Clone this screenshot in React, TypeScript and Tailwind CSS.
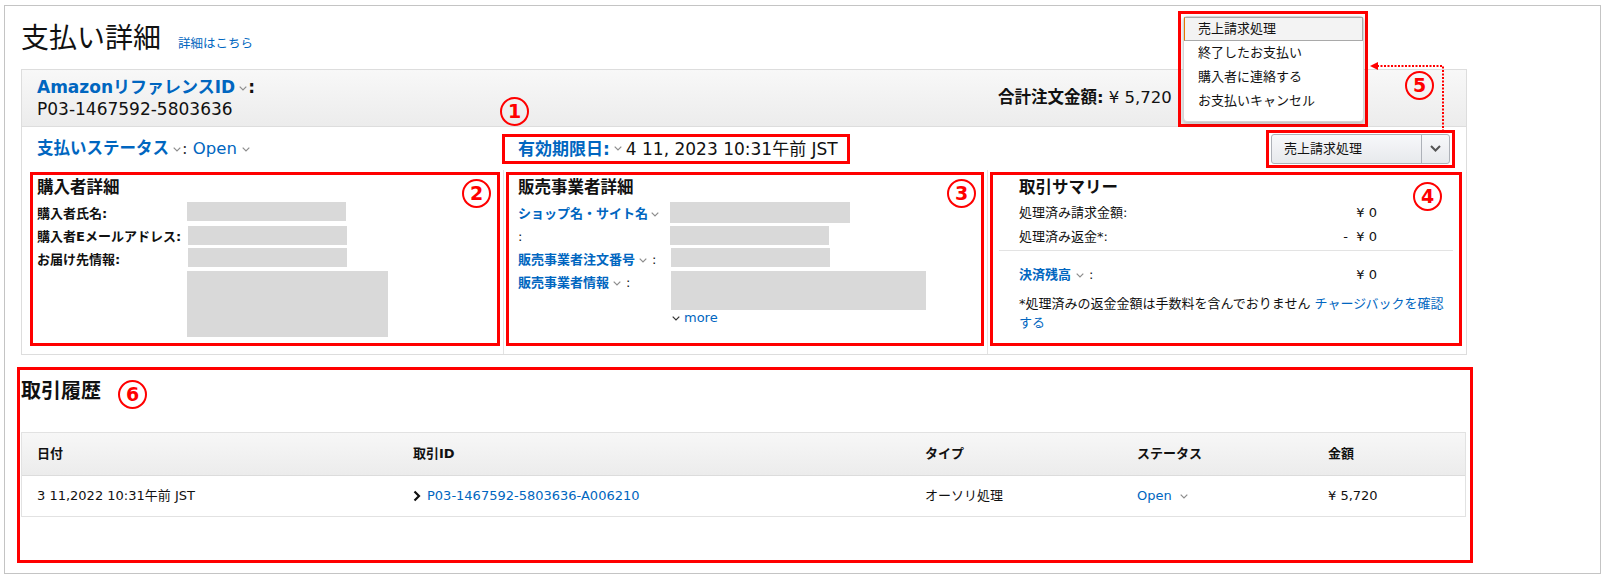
import React from 'react';

type CaretProps = { className?: string; color?: string };

// tiny grey "v" used next to popover labels
const Caret: React.FC<CaretProps> = ({ className = '', color = '#8d8d8d' }) => (
  <svg
    viewBox="0 0 8 5"
    className={`inline-block h-[5px] w-[8px] align-middle ${className}`}
    fill="none"
    stroke={color}
    strokeWidth="1.2"
  >
    <path d="M0.7 0.7L4 4L7.3 0.7" />
  </svg>
);

// red circled number used as annotation
const Badge: React.FC<{ n: number; className: string }> = ({ n, className }) => (
  <span
    className={`absolute flex h-[29px] w-[29px] items-center justify-center rounded-full border-[2.5px] border-[#ff0000] font-['DejaVu_Sans',sans-serif] text-[19px] font-bold leading-none text-[#ff0000] ${className}`}
  >
    {n}
  </span>
);

const Gray: React.FC<{ className: string }> = ({ className }) => <div className={`bg-[#d9d9d9] ${className}`} />;

const menuItems = ['終了したお支払い', '購入者に連絡する', 'お支払いキャンセル'];

export default function App() {
  return (
    <div className="h-[584px] w-[1610px] overflow-hidden bg-white pl-[4px] pt-[5px] font-['DejaVu_Sans','Noto_Sans_CJK_JP',sans-serif] text-[#111111]">
      <div className="relative h-[569px] w-[1597px] border border-[#c4c4c4] pl-[16px]">
        {/* Title */}
        <div className="flex h-[63px] items-baseline gap-[17px] pt-[16px]">
          <h1 className="text-[28px] leading-[34px]">支払い詳細</h1>
          <a className="text-[12.5px] text-[#0066c0]">詳細はこちら</a>
        </div>

        {/* Summary panel */}
        <div className="w-[1446px] border border-[#dddddd]">
          <div className="flex h-[57px] border-b border-[#dddddd] bg-gradient-to-b from-[#f8f8f8] to-[#ececec] pl-[15px]">
            <div className="w-[961px] pt-[6px] leading-[22px]">
              <div className="text-[17px] font-bold">
                <span className="text-[#0066c0]">AmazonリファレンスID</span>
                <Caret className="ml-[4px] mr-[1px]" />:
              </div>
              <div className="text-[17px]">P03-1467592-5803636</div>
            </div>
            <div className="self-center text-[16.5px] leading-[22px]">
              <span className="font-bold">合計注文金額:</span> ¥ 5,720
            </div>
          </div>

          <div className="flex h-[43px] items-center pl-[15px]">
            <div className="w-[465px] text-[16.5px] leading-[22px]">
              <span className="font-bold text-[#0066c0]">支払いステータス</span>
              <Caret className="ml-[4px] mr-[1px]" />
              <span className="text-[#333]">: </span>
              <span className="text-[#0066c0]">Open</span>
              <Caret className="ml-[5px]" />
            </div>
            <div className="flex h-[30px] w-[348px] items-center border-[3px] border-[#ff0000] pl-[13px] text-[17px] leading-[22px]">
              <span className="font-bold text-[#0066c0]">有効期限日:</span>
              <Caret className="mx-[4px]" />
              <span>4 11, 2023 10:31午前 JST</span>
            </div>
            <div className="ml-auto mr-[11px] flex h-[38px] w-[189px] items-center border-[3px] border-[#ff0000] px-[2px]">
              <div className="flex h-[30px] w-full rounded-[3px] border border-[#adb1b8] bg-gradient-to-b from-[#f7f8fa] to-[#e7e9ec]">
                <span className="flex-1 pl-[12px] text-[13px] leading-[28px]">売上請求処理</span>
                <span className="flex w-[28px] items-center justify-center border-l border-[#adb1b8]">
                  <svg viewBox="0 0 11 7" className="h-[7px] w-[11px]" fill="none" stroke="#555" strokeWidth="2">
                    <path d="M1 1l4.5 4.5L10 1" />
                  </svg>
                </span>
              </div>
            </div>
          </div>

          <div className="grid grid-cols-[482px_484px_1fr]">
            {/* Buyer */}
            <div className="border-r border-[#e3e3e3] pb-[8px] pl-[8px] pt-[2px]">
              <div className="h-[174px] w-[470px] border-[3px] border-[#ff0000] pl-[4px] pt-[2px]">
                <h3 className="text-[16.5px] font-bold leading-[22px]">購入者詳細</h3>
                <div className="mt-[3px] flex">
                  <div className="w-[150px] text-[13px] font-bold leading-[23px]">
                    <div>購入者氏名:</div>
                    <div>購入者Eメールアドレス:</div>
                    <div>お届け先情報:</div>
                  </div>
                  <div className="flex flex-col">
                    <Gray className="h-[19px] w-[159px]" />
                    <Gray className="ml-[1px] mt-[5px] h-[19px] w-[159px]" />
                    <Gray className="ml-[1px] mt-[3px] h-[19px] w-[159px]" />
                    <Gray className="mt-[4px] h-[66px] w-[201px]" />
                  </div>
                </div>
              </div>
            </div>

            {/* Seller */}
            <div className="border-r border-[#e3e3e3] pb-[8px] pl-[2px] pt-[2px]">
              <div className="h-[174px] w-[478px] border-[3px] border-[#ff0000] pl-[9px] pt-[2px]">
                <h3 className="text-[16.5px] font-bold leading-[22px]">販売事業者詳細</h3>
                <div className="mt-[3px] flex">
                  <div className="w-[152px] text-[13px] leading-[23px]">
                    <div>
                      <span className="font-bold text-[#0066c0]">ショップ名・サイト名</span>
                      <Caret className="ml-[3px]" />
                    </div>
                    <div>:</div>
                    <div>
                      <span className="font-bold text-[#0066c0]">販売事業者注文番号</span>
                      <Caret className="ml-[4px] mr-[5px]" />:
                    </div>
                    <div>
                      <span className="font-bold text-[#0066c0]">販売事業者情報</span>
                      <Caret className="ml-[4px] mr-[5px]" />:
                    </div>
                  </div>
                  <div className="flex flex-col">
                    <Gray className="h-[21px] w-[180px]" />
                    <Gray className="mt-[3px] h-[19px] w-[159px]" />
                    <Gray className="ml-[1px] mt-[3px] h-[19px] w-[159px]" />
                    <Gray className="ml-[1px] mt-[4px] h-[39px] w-[255px]" />
                    <div className="ml-[2px] text-[13px] leading-[16px] text-[#0066c0]">
                      <Caret color="#333" className="mr-[4px]" />
                      more
                    </div>
                  </div>
                </div>
              </div>
            </div>

            {/* Transaction summary */}
            <div className="pb-[8px] pl-[2px] pt-[2px]">
              <div className="h-[174px] w-[472px] border-[3px] border-[#ff0000] px-[6px] pt-[2px]">
                <div className="pl-[20px]">
                  <h3 className="text-[16.5px] font-bold leading-[22px]">取引サマリー</h3>
                  <div className="mt-[2px] flex w-[358px] justify-between text-[13px] leading-[24px]">
                    <span>処理済み請求金額:</span>
                    <span>¥ 0</span>
                  </div>
                  <div className="flex w-[358px] justify-between text-[13px] leading-[24px]">
                    <span>処理済み返金*:</span>
                    <span>-&nbsp;&nbsp;¥ 0</span>
                  </div>
                </div>
                <div className="mt-[1px] h-px bg-[#e3e3e3]" />
                <div className="pl-[20px]">
                  <div className="mt-[12px] flex w-[358px] justify-between text-[13px] leading-[24px]">
                    <span>
                      <span className="font-bold text-[#0066c0]">決済残高</span>
                      <Caret className="ml-[5px] mr-[5px]" />:
                    </span>
                    <span>¥ 0</span>
                  </div>
                  <p className="mt-[7px] w-[432px] text-[13px] leading-[19px]">
                    *処理済みの返金金額は手数料を含んでおりません <span className="text-[#0066c0]">チャージバックを確認する</span>
                  </p>
                </div>
              </div>
            </div>
          </div>
        </div>

        {/* Transaction history */}
        <div className="-ml-[4px] mt-[12px] h-[196px] w-[1456px] border-[3px] border-[#ff0000] pl-[1px] pt-[9px]">
          <h2 className="text-[20px] font-bold leading-[24px]">取引履歴</h2>
          <div className="mt-[29px] w-[1445px] border border-[#e2e2e2] text-[13px]">
            <div className="grid h-[43px] grid-cols-[391px_512px_212px_191px_1fr] items-center border-b border-[#dcdcdc] bg-gradient-to-b from-[#f7f7f7] to-[#ececec] font-bold">
              <div className="pl-[15px]">日付</div>
              <div>取引ID</div>
              <div>タイプ</div>
              <div>ステータス</div>
              <div>金額</div>
            </div>
            <div className="grid h-[40px] grid-cols-[391px_512px_212px_191px_1fr] items-center">
              <div className="pl-[15px]">3 11,2022 10:31午前 JST</div>
              <div className="flex items-center">
                <svg viewBox="0 0 8 12" className="mr-[6px] h-[12px] w-[8px]" fill="none" stroke="#111" strokeWidth="2.2">
                  <path d="M1.5 1.5l4.5 4.5-4.5 4.5" />
                </svg>
                <a className="text-[#0066c0]">P03-1467592-5803636-A006210</a>
              </div>
              <div>オーソリ処理</div>
              <div>
                <span className="text-[#0066c0]">Open</span>
                <Caret className="ml-[8px]" />
              </div>
              <div>¥ 5,720</div>
            </div>
          </div>
        </div>

        {/* Opened dropdown menu */}
        <div className="absolute left-[1173px] top-[5px] h-[116px] w-[190px] border-[3px] border-[#ff0000] p-[2px]">
          <div className="h-[106px] w-[181px] rounded-[4px] border border-[#d5d5d5] bg-white text-[13px] leading-[22px] shadow-[0_2px_4px_rgba(0,0,0,0.2)]">
            <div className="h-[24px] border border-[#a9a9a9] border-l-[#e77600] bg-[#f3f3f3] pl-[13px]">売上請求処理</div>
            {menuItems.map((item) => (
              <div key={item} className="h-[24px] pl-[14px] leading-[24px]">
                {item}
              </div>
            ))}
          </div>
        </div>

        {/* dotted pointer from button to menu */}
        <svg className="absolute left-[1361px] top-[52px] h-[74px] w-[82px]" viewBox="0 0 82 74" fill="none">
          <path d="M11 8H77V72" stroke="#ff0000" strokeWidth="2" strokeDasharray="2 1.5" />
          <path d="M4 8L12 4V12Z" fill="#ff0000" />
        </svg>

        <Badge n={1} className="left-[495px] top-[91px]" />
        <Badge n={2} className="left-[457px] top-[173px]" />
        <Badge n={3} className="left-[942px] top-[173px]" />
        <Badge n={4} className="left-[1408px] top-[176px]" />
        <Badge n={5} className="left-[1400px] top-[65px]" />
        <Badge n={6} className="left-[113px] top-[374px]" />
      </div>
    </div>
  );
}
